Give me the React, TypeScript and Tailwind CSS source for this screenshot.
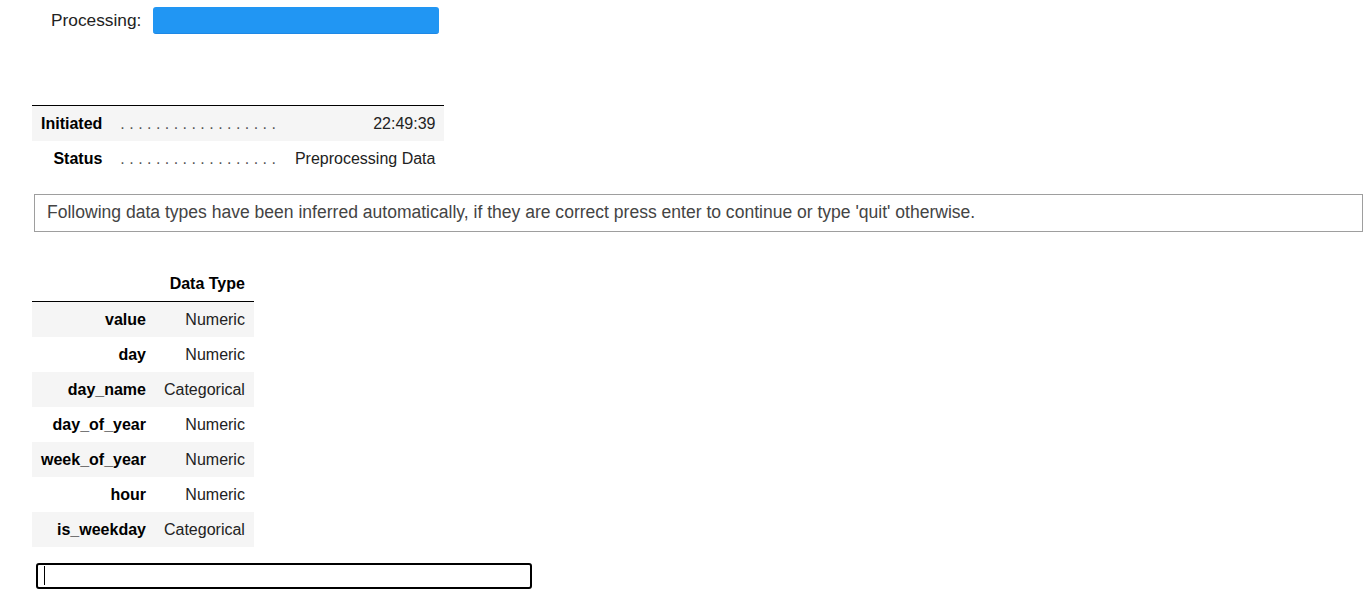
const info = [
  { label: "Initiated", value: "22:49:39" },
  { label: "Status", value: "Preprocessing Data" },
];

const dtypes = [
  { name: "value", type: "Numeric" },
  { name: "day", type: "Numeric" },
  { name: "day_name", type: "Categorical" },
  { name: "day_of_year", type: "Numeric" },
  { name: "week_of_year", type: "Numeric" },
  { name: "hour", type: "Numeric" },
  { name: "is_weekday", type: "Categorical" },
];

const dots = ". . . . . . . . . . . . . . . . . .";

export default function App() {
  return (
    <div
      className="min-h-screen bg-white text-black"
      style={{ fontFamily: '"Liberation Sans", Arial, sans-serif' }}
    >
      {/* Progress */}
      <div className="flex items-center pt-[7px] pl-[51px]">
        <span className="text-[17.3px] leading-[27px] text-[#222] mr-[12px]">Processing:</span>
        <div className="w-[286px] h-[27px] rounded-[3px] bg-[#2196f3] border-b border-[#1e88e5]" />
      </div>

      {/* Monitor table */}
      <div className="pl-[32px] mt-[71px]">
        <table className="border-collapse border-t border-black text-[16px]">
          <tbody>
            {info.map((row, i) => (
              <tr key={row.label} className={i % 2 === 0 ? "bg-[#f5f5f5]" : "bg-white"}>
                <th className="h-[35px] px-[9px] pt-[1px] text-right font-bold align-middle">{row.label}</th>
                <td className="h-[35px] px-[9px] pt-[1px] text-[#555] whitespace-pre align-middle">{dots}</td>
                <td className="h-[35px] pl-[10px] pr-[9px] pt-[1px] text-right text-[#222] align-middle">{row.value}</td>
              </tr>
            ))}
          </tbody>
        </table>
      </div>

      {/* Message */}
      <div className="ml-[34px] mt-[18px] w-[1329px] h-[38px] border border-[#9e9e9e] flex items-center pl-[12px]">
        <span className="text-[17.55px] text-[#444]">
          Following data types have been inferred automatically, if they are correct press enter to continue or type 'quit' otherwise.
        </span>
      </div>

      {/* Data types */}
      <div className="pl-[32px] mt-[35px]">
        <table className="border-collapse text-[16px]">
          <thead>
            <tr className="border-b border-black">
              <th className="h-[35px] px-[9px]" />
              <th className="h-[35px] px-[9px] pt-[1px] text-right font-bold">Data Type</th>
            </tr>
          </thead>
          <tbody>
            {dtypes.map((row, i) => (
              <tr key={row.name} className={i % 2 === 0 ? "bg-[#f5f5f5]" : "bg-white"}>
                <th className="h-[35px] px-[9px] pt-[2px] text-right font-bold">{row.name}</th>
                <td className="h-[35px] px-[9px] pt-[2px] text-right text-[#222]">{row.type}</td>
              </tr>
            ))}
          </tbody>
        </table>
      </div>

      {/* Input */}
      <div className="pl-[36px] mt-[16px]">
        <div className="w-[496px] h-[26px] border-2 border-black rounded-[3px] flex items-center pl-[6px]">
          <span className="w-px h-[19px] bg-black" />
        </div>
      </div>
    </div>
  );
}
